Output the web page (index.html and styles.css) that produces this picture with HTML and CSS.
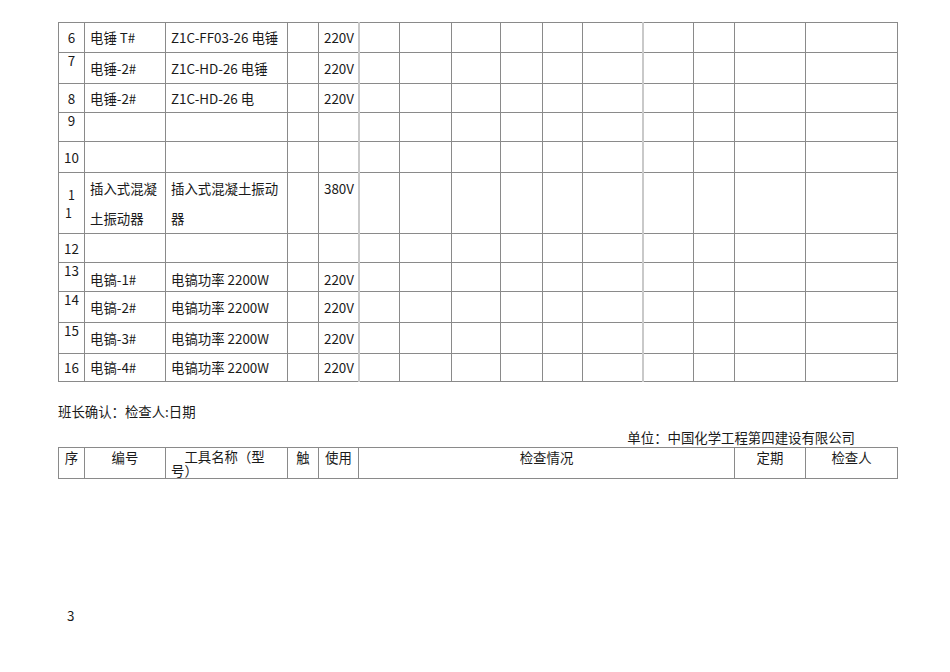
FILE: index.html
```html
<!DOCTYPE html>
<html lang="zh-CN">
<head>
<meta charset="utf-8">
<title>工具检查表</title>
<link rel="stylesheet" href="styles.css">
</head>
<body>
<div class="page">
  <table class="grid">
    <colgroup>
      <col class="c1"><col class="c2"><col class="c3"><col class="c4"><col class="c5">
      <col class="c6"><col class="c7"><col class="c8"><col class="c9"><col class="c10">
      <col class="c11"><col class="c12"><col class="c13"><col class="c14"><col class="c15">
    </colgroup>
    <tr class="h30">
      <td class="no">6</td><td>电锤 T#</td><td>Z1C-FF03-26 电锤</td><td></td><td>220V</td>
      <td class="soft"></td><td></td><td></td><td></td><td></td><td></td><td class="soft"></td><td></td><td></td><td></td>
    </tr>
    <tr class="h31">
      <td class="no top">7</td><td>电锤-2#</td><td>Z1C-HD-26 电锤</td><td></td><td>220V</td>
      <td class="soft"></td><td></td><td></td><td></td><td></td><td></td><td class="soft"></td><td></td><td></td><td></td>
    </tr>
    <tr class="h29">
      <td class="no">8</td><td>电锤-2#</td><td>Z1C-HD-26 电</td><td></td><td>220V</td>
      <td class="soft"></td><td></td><td></td><td></td><td></td><td></td><td class="soft"></td><td></td><td></td><td></td>
    </tr>
    <tr class="h29">
      <td class="no top">9</td><td></td><td></td><td></td><td></td>
      <td class="soft"></td><td></td><td></td><td></td><td></td><td></td><td class="soft"></td><td></td><td></td><td></td>
    </tr>
    <tr class="h31">
      <td class="no">10</td><td></td><td></td><td></td><td></td>
      <td class="soft"></td><td></td><td></td><td></td><td></td><td></td><td class="soft"></td><td></td><td></td><td></td>
    </tr>
    <tr class="h60">
      <td class="no split"><span class="split-a">1</span><span class="split-b">1</span></td>
      <td class="top tall">插入式混凝土振动器</td><td class="top tall">插入式混凝土振动器</td><td></td><td class="top tall">380V</td>
      <td class="soft"></td><td></td><td></td><td></td><td></td><td></td><td class="soft"></td><td></td><td></td><td></td>
    </tr>
    <tr class="h29">
      <td class="no">12</td><td></td><td></td><td></td><td></td>
      <td class="soft"></td><td></td><td></td><td></td><td></td><td></td><td class="soft"></td><td></td><td></td><td></td>
    </tr>
    <tr class="h29">
      <td class="no top">13</td><td class="low">电镐-1#</td><td class="low">电镐功率 2200W</td><td></td><td class="low">220V</td>
      <td class="soft"></td><td></td><td></td><td></td><td></td><td></td><td class="soft"></td><td></td><td></td><td></td>
    </tr>
    <tr class="h31">
      <td class="no top">14</td><td>电镐-2#</td><td>电镐功率 2200W</td><td></td><td>220V</td>
      <td class="soft"></td><td></td><td></td><td></td><td></td><td></td><td class="soft"></td><td></td><td></td><td></td>
    </tr>
    <tr class="h31">
      <td class="no top">15</td><td>电镐-3#</td><td>电镐功率 2200W</td><td></td><td>220V</td>
      <td class="soft"></td><td></td><td></td><td></td><td></td><td></td><td class="soft"></td><td></td><td></td><td></td>
    </tr>
    <tr class="h28">
      <td class="no">16</td><td>电镐-4#</td><td>电镐功率 2200W</td><td></td><td>220V</td>
      <td class="soft"></td><td></td><td></td><td></td><td></td><td></td><td class="soft"></td><td></td><td></td><td></td>
    </tr>
  </table>

  <p class="confirm">班长确认：检查人:日期</p>
  <p class="unit">单位：中国化学工程第四建设有限公司</p>

  <table class="grid head">
    <colgroup>
      <col class="c1"><col class="c2"><col class="c3"><col class="c4"><col class="c5">
      <col class="w-check"><col class="c14"><col class="c15">
    </colgroup>
    <tr class="h31">
      <td class="ctr">序</td>
      <td class="ctr">编号</td>
      <td class="name">　工具名称（型号）</td>
      <td class="ctr">触</td>
      <td class="ctr">使用</td>
      <td class="ctr">检查情况</td>
      <td class="ctr">定期</td>
      <td class="ctr">检查人</td>
    </tr>
  </table>

  <p class="pageno">3</p>
</div>
</body>
</html>
```

FILE: styles.css
```css
html, body {
  margin: 0;
  padding: 0;
  background: #ffffff;
}

body {
  font-family: "Noto Sans CJK SC", "Liberation Sans", sans-serif;
  font-size: 13.4px;
  color: #1a1a1a;
}

.page {
  width: 839px;
  padding: 22px 0 0 58px;
}

.grid {
  width: 839px;
  table-layout: fixed;
  border-collapse: collapse;
}

.grid td {
  border: 1px solid #8a8a8a;
  padding: 0 4px 0 5px;
  line-height: 15px;
  vertical-align: middle;
  white-space: normal;
  overflow: visible;
}

.c1 { width: 26px; }
.c2 { width: 81px; }
.c3 { width: 122px; }
.c4 { width: 31px; }
.c5 { width: 40px; }
.c6 { width: 41px; }
.c7 { width: 52px; }
.c8 { width: 49px; }
.c9 { width: 42px; }
.c10 { width: 40px; }
.c11 { width: 60px; }
.c12 { width: 51px; }
.c13 { width: 41px; }
.c14 { width: 71px; }
.c15 { width: 92px; }
.w-check { width: 376px; }

.h28 { height: 28px; }
.h29 { height: 29px; }
.h30 { height: 30px; }
.h31 { height: 31px; }
.h60 { height: 60px; }

.grid td.no {
  padding: 0;
  text-align: center;
}

.grid td.top {
  vertical-align: top;
}

.grid td.tall {
  line-height: 30px;
}

.grid td.low {
  padding-top: 4px;
}

.grid td.soft {
  border-left: 2px solid #c9c9c9;
}

.grid td.split {
  font-size: 12.5px;
  line-height: 18px;
  padding-top: 2px;
}

.split-a {
  display: block;
  text-align: center;
}

.split-b {
  display: block;
  text-align: left;
  padding-left: 6px;
}

.confirm {
  margin: 20px 0 0 0;
  line-height: 18px;
}

.unit {
  margin: 8px 0 0 0;
  padding-right: 42px;
  line-height: 19px;
  text-align: right;
}

.head td {
  vertical-align: top;
  line-height: 19px;
  padding-top: 0;
}

.head td.ctr {
  text-align: center;
  padding-left: 0;
  padding-right: 0;
}

.head td.name {
  line-height: 14px;
  padding: 1px 5px 0 5px;
}

.pageno {
  margin: 128px 0 0 0;
  padding-left: 9px;
  line-height: 16px;
}
```
